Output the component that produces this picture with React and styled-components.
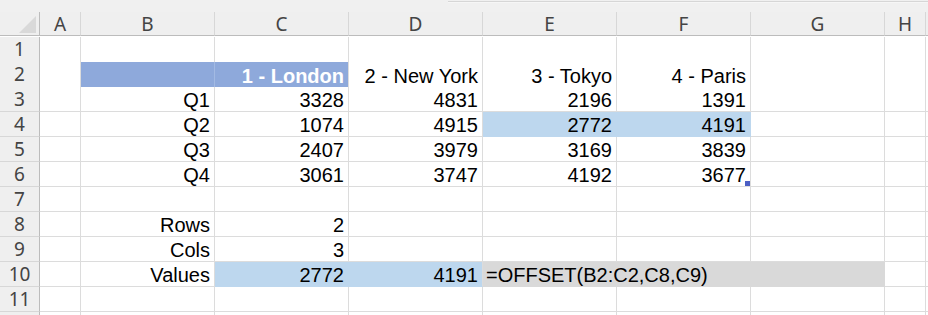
import React from 'react';
import styled, { createGlobalStyle } from 'styled-components';

const GlobalStyle = createGlobalStyle`
  html, body {
    margin: 0;
    padding: 0;
    background: #ffffff;
  }
  * {
    box-sizing: border-box;
  }
`;

const GRID = '#dcdcdc';
const HEAD_BG = '#efefef';
const HEAD_EDGE = '#bcbcbc';

const Sheet = styled.div`
  width: 928px;
  height: 315px;
  overflow: hidden;
  background: #ffffff;
  display: flex;
  flex-direction: column;
`;

const TopBand = styled.div`
  height: 12px;
  flex: none;
  background: #f0f0f0;
  display: flex;
`;

const TopEdge = styled.div`
  margin-left: 448px;
  margin-top: 1px;
  height: 2px;
  flex: 1;
  border-top: 1px solid #d6d6d6;
  background: #f6f6f6;
`;

const Grid = styled.div`
  display: grid;
  grid-template-columns: 40px 41px repeat(6, 134px) 41px 1fr;
  grid-auto-rows: 25px;
  font-family: 'Liberation Sans', Arial, sans-serif;
  font-size: 20px;
  color: #000000;
`;

const Corner = styled.div`
  height: 24px;
  background: ${HEAD_BG};
  border-right: 1px solid ${HEAD_EDGE};
  border-bottom: 1px solid ${HEAD_EDGE};
  display: flex;
  align-items: flex-end;
  justify-content: flex-end;
  padding: 0 3px 2px 0;
`;

const ColHead = styled.div`
  height: 24px;
  background: ${HEAD_BG};
  border-right: 1px solid #d7d7d7;
  border-bottom: 1px solid ${HEAD_EDGE};
  display: flex;
  align-items: center;
  justify-content: center;
  font-family: 'Noto Sans', 'Open Sans', sans-serif;
  font-size: 19px;
  color: #444444;
  line-height: 1;
  padding-top: 1px;
`;

const RowHead = styled.div`
  height: ${p => p.$h}px;
  background: ${HEAD_BG};
  border-right: 1px solid ${HEAD_EDGE};
  border-bottom: 1px solid #d7d7d7;
  display: flex;
  align-items: center;
  justify-content: center;
  font-family: 'Noto Sans', 'Open Sans', sans-serif;
  font-size: 19px;
  color: #444444;
  line-height: 1;
`;

const Cell = styled.div`
  position: relative;
  height: ${p => p.$h}px;
  grid-column: span ${p => p.$span || 1};
  background: ${p => p.$fill || '#ffffff'};
  border-right: 1px solid ${p => p.$edge || p.$fill || GRID};
  border-bottom: 1px solid ${p => p.$fill || GRID};
  display: flex;
  align-items: flex-end;
  justify-content: ${p => (p.$left ? 'flex-start' : 'flex-end')};
  padding: 0 ${p => (p.$left ? 0 : 4)}px 1px ${p => (p.$left ? 3 : 0)}px;
  line-height: 20px;
  white-space: nowrap;
  font-weight: ${p => (p.$bold ? 700 : 400)};
  color: ${p => p.$color || '#000000'};
`;

const FillHandle = styled.span`
  position: absolute;
  right: 0;
  bottom: 0;
  width: 6px;
  height: 6px;
  background: #4c5fc4;
  border-top: 1px solid #ffffff;
  border-left: 1px solid #ffffff;
`;

const columns = ['A', 'B', 'C', 'D', 'E', 'F', 'G', 'H', ''];

const HEADER_FILL = '#8ea9db';
const PICK_FILL = '#bdd7ee';
const FORMULA_FILL = '#d9d9d9';

// each row: its number (blank for the row cut off at the bottom) and its filled cells
const rows = [
  { n: 1, h: 26, cells: [] },
  {
    n: 2,
    h: 26,
    cells: [
      { col: 'B', fill: HEADER_FILL, edge: '#a3bae3' },
      { col: 'C', text: '1 - London', fill: HEADER_FILL, bold: true, color: '#ffffff', edge: GRID },
      { col: 'D', text: '2 - New York' },
      { col: 'E', text: '3 - Tokyo' },
      { col: 'F', text: '4 - Paris' },
    ],
  },
  { n: 3, cells: [{ col: 'B', text: 'Q1' }, { col: 'C', text: '3328' }, { col: 'D', text: '4831' }, { col: 'E', text: '2196' }, { col: 'F', text: '1391' }] },
  {
    n: 4,
    cells: [
      { col: 'B', text: 'Q2' },
      { col: 'C', text: '1074' },
      { col: 'D', text: '4915' },
      { col: 'E', text: '2772', fill: PICK_FILL },
      { col: 'F', text: '4191', fill: PICK_FILL },
    ],
  },
  { n: 5, cells: [{ col: 'B', text: 'Q3' }, { col: 'C', text: '2407' }, { col: 'D', text: '3979' }, { col: 'E', text: '3169' }, { col: 'F', text: '3839' }] },
  { n: 6, cells: [{ col: 'B', text: 'Q4' }, { col: 'C', text: '3061' }, { col: 'D', text: '3747' }, { col: 'E', text: '4192' }, { col: 'F', text: '3677', handle: true }] },
  { n: 7, cells: [] },
  { n: 8, cells: [{ col: 'B', text: 'Rows' }, { col: 'C', text: '2' }] },
  { n: 9, cells: [{ col: 'B', text: 'Cols' }, { col: 'C', text: '3' }] },
  {
    n: 10,
    cells: [
      { col: 'B', text: 'Values' },
      { col: 'C', text: '2772', fill: PICK_FILL },
      { col: 'D', text: '4191', fill: PICK_FILL, edge: GRID },
      { col: 'E', text: '=OFFSET(B2:C2,C8,C9)', fill: FORMULA_FILL, left: true, span: 3 },
    ],
  },
  { n: 11, cells: [] },
  { n: '', cells: [] },
];

function SheetRow({ row }) {
  const h = row.h || 25;
  const out = [];
  let skip = 0;
  columns.forEach((col, i) => {
    if (skip > 0) {
      skip -= 1;
      return;
    }
    const c = row.cells.find(x => x.col === col) || {};
    if (c.span) skip = c.span - 1;
    out.push(
      <Cell
        key={col + i}
        $h={h}
        $fill={c.fill}
        $edge={c.edge}
        $bold={c.bold}
        $color={c.color}
        $left={c.left}
        $span={c.span}
      >
        {c.text}
        {c.handle && <FillHandle />}
      </Cell>
    );
  });
  return (
    <>
      <RowHead $h={h}>{row.n}</RowHead>
      {out}
    </>
  );
}

export default function App() {
  return (
    <>
      <GlobalStyle />
      <Sheet>
        <TopBand>
          <TopEdge />
        </TopBand>
        <Grid>
          <Corner>
            <svg width="17" height="17" viewBox="0 0 17 17">
              <polygon points="17,0 17,17 0,17" fill="#d9d9d9" />
            </svg>
          </Corner>
          {columns.map((c, i) => (
            <ColHead key={'h' + i}>{c}</ColHead>
          ))}
          {rows.map((r, i) => (
            <SheetRow key={i} row={r} />
          ))}
        </Grid>
      </Sheet>
    </>
  );
}
